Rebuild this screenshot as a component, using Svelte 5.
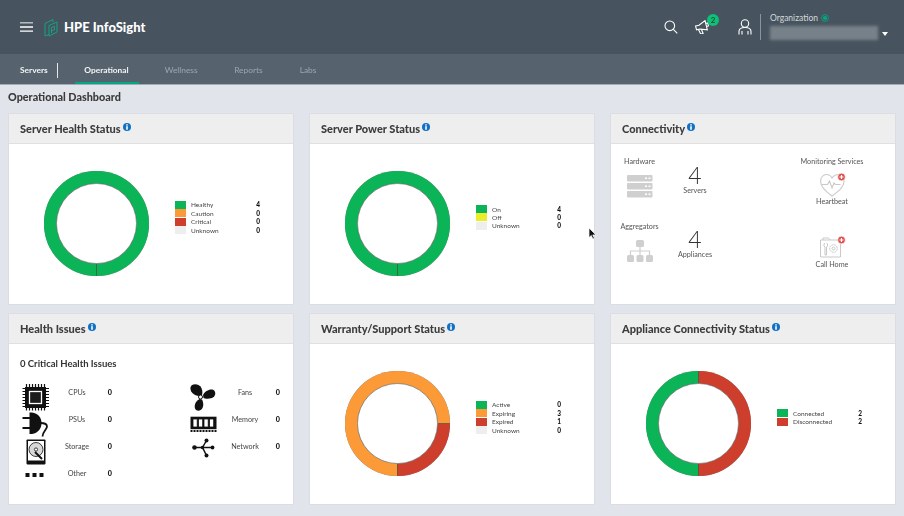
<script>
	const green = "#0cb458";
	const orange = "#fd9a38";
	const red = "#cd3f2c";
	const grey = "#eeeeee";
	const yellow = "#e8ee2a";

	const navItems = ["Wellness", "Reports", "Labs"];

	// one entry per donut card
	const healthLegend = [
		{ label: "Healthy", value: 4, color: green },
		{ label: "Caution", value: 0, color: orange },
		{ label: "Critical", value: 0, color: red },
		{ label: "Unknown", value: 0, color: grey }
	];
	const powerLegend = [
		{ label: "On", value: 4, color: green },
		{ label: "Off", value: 0, color: yellow },
		{ label: "Unknown", value: 0, color: grey }
	];
	const warrantyLegend = [
		{ label: "Active", value: 0, color: green },
		{ label: "Expiring", value: 3, color: orange },
		{ label: "Expired", value: 1, color: red },
		{ label: "Unknown", value: 0, color: grey }
	];
	const applianceLegend = [
		{ label: "Connected", value: 2, color: green },
		{ label: "Disconnected", value: 2, color: red }
	];

	const leftIssues = [
		{ icon: "cpu", label: "CPUs" },
		{ icon: "psu", label: "PSUs" },
		{ icon: "storage", label: "Storage" },
		{ icon: "other", label: "Other" }
	];
	const rightIssues = [
		{ icon: "fan", label: "Fans" },
		{ icon: "memory", label: "Memory" },
		{ icon: "network", label: "Network" }
	];

	const R = 46.25;
	const CIRC = 2 * Math.PI * R;

	// slices are drawn from 3 o'clock; the group is turned so they begin at 6 o'clock
	function slices(legend) {
		const total = legend.reduce((sum, item) => sum + item.value, 0);
		let offset = 0;
		return legend.filter(item => item.value > 0).map(item => {
			const len = (item.value / total) * CIRC;
			const slice = { color: item.color, len, offset, angle: (offset / CIRC) * 360 };
			offset += len;
			return slice;
		});
	}
</script>

{#snippet info()}
	<svg class="info" viewBox="0 0 10 10" width="8" height="8">
		<circle cx="5" cy="5" r="5" fill="#1271c4" />
		<rect x="4" y="1.6" width="2" height="1.6" fill="#fff" />
		<rect x="4" y="4" width="2" height="4.4" fill="#fff" />
	</svg>
{/snippet}

{#snippet donutCard(title, legend)}
	<section class="card">
		<h2>{title}{@render info()}</h2>
		<div class="donutBody">
			<svg class="donut" viewBox="0 0 105 105" width="105" height="105">
				<circle cx="52.5" cy="52.5" r="52.7" fill="#8a8a8a" />
				<g transform="rotate(90 52.5 52.5)">
					{#each slices(legend) as s}
						<circle cx="52.5" cy="52.5" r={R} fill="none" stroke={s.color} stroke-width="12.5"
							stroke-dasharray="{s.len} {CIRC - s.len}" stroke-dashoffset={-s.offset} />
					{/each}
					{#each slices(legend) as s}
						<line x1="92.5" y1="52.5" x2="105" y2="52.5" stroke="#4f4a3c" stroke-width="0.7"
							transform="rotate({s.angle} 52.5 52.5)" />
					{/each}
				</g>
				<circle cx="52.5" cy="52.5" r="40" fill="#fff" stroke="#666" stroke-width="0.6" />
			</svg>
			<div class="legend">
				{#each legend as item}
					<div class="legendRow">
						<span class="swatch" style="background:{item.color}"></span>
						<span class="legendLabel">{item.label}</span>
						<b>{item.value}</b>
					</div>
				{/each}
			</div>
		</div>
	</section>
{/snippet}

{#snippet issueIcon(name)}
	<svg viewBox="0 0 27 27" width="27" height="27">
		{#if name === "cpu"}
			<path d="M0 5h27M0 8h27M0 11h27M0 14h27M0 17h27M0 20h27M0 23h27M4 0v27M7 0v27M10 0v27M13 0v27M16 0v27M19 0v27M22 0v27" stroke="#111" stroke-width="1.200" transform="translate(0.500 -0.500)" />
			<rect x="3" y="3" width="21" height="21" fill="#111" />
			<rect x="7.500" y="7.500" width="12" height="12" fill="#1c1c1c" stroke="#fff" stroke-width="1.300" />
		{:else if name === "psu"}
			<path d="M0.500 7h8M0.500 17h8" stroke="#111" stroke-width="1.800" />
			<path d="M7.500 1.500h2.500c6 1 9.500 5 9.500 10.500s-3.500 10-9.500 11H7.500z" fill="#111" />
			<path d="M18.500 12C22 12 25 13 25 15.500 25 18.500 21 20 20.500 25.500" fill="none" stroke="#111" stroke-width="1.800" />
		{:else if name === "storage"}
			<rect x="4.500" y="1.400" width="19" height="25" rx="0.800" fill="#111" />
			<rect x="6" y="3" width="16" height="19.500" fill="#fff" />
			<circle cx="14" cy="11.500" r="7" fill="#d8d8d8" stroke="#111" stroke-width="0.800" />
			<circle cx="14" cy="11.500" r="1.600" fill="#fff" stroke="#111" stroke-width="0.800" />
			<path d="M13 14l7 7" stroke="#111" stroke-width="2" />
		{:else if name === "other"}
			<rect x="3.500" y="8" width="4" height="4" fill="#111" />
			<rect x="10.500" y="8" width="4" height="4" fill="#111" />
			<rect x="17.500" y="8" width="4" height="4" fill="#111" />
		{:else if name === "fan"}
			<path d="M9 12C4 11.500 0 8 .5 3.500 1 .5 5-.5 8.500 1 12 3 13 7 12 11z" fill="#111" />
			<path d="M13 11c2-4 7-6.500 10.500-5 3 2 2 6.500-1.500 8-3 1-7 1-8.500 0z" fill="#111" />
			<path d="M9.500 15c-4 2-5.500 6-4.500 9.500 1.500 3 5.500 3 7.500-.5 1.500-3 .5-6.500-.5-8.500z" fill="#111" />
			<circle cx="10.500" cy="13" r="2" fill="#fff" stroke="#111" stroke-width="1" />
		{:else if name === "memory"}
			<rect x="0.500" y="5.700" width="26" height="12.500" fill="#111" />
			<rect x="3" y="8" width="4.200" height="8" fill="#fff" stroke="#111" stroke-width="0.800" />
			<rect x="8.500" y="8" width="4.200" height="8" fill="#fff" stroke="#111" stroke-width="0.800" />
			<rect x="14" y="8" width="4.200" height="8" fill="#fff" stroke="#111" stroke-width="0.800" />
			<rect x="19.500" y="8" width="4.200" height="8" fill="#fff" stroke="#111" stroke-width="0.800" />
			<path d="M.5 20h26" stroke="#111" stroke-width="1.800" stroke-dasharray="2 1" />
		{:else}
			<path d="M4.500 9.500h18M12.500 9.500l4-7M12.500 9.500l4 8" stroke="#111" stroke-width="1.500" fill="none" />
			<circle cx="4.500" cy="9.500" r="2.300" fill="#111" /><circle cx="12.500" cy="9.500" r="1.800" fill="#111" />
			<circle cx="22.500" cy="9.500" r="1.900" fill="#111" /><circle cx="16.500" cy="2.400" r="2" fill="#111" /><circle cx="16.500" cy="17.400" r="2" fill="#111" />
		{/if}
	</svg>
{/snippet}

{#snippet issueColumn(items)}
	<div class="issueCol">
		{#each items as item}
			<div class="issueRow">
				<span class="issueIcon">{@render issueIcon(item.icon)}</span>
				<span class="issueLabel">{item.label}</span>
				<b>0</b>
			</div>
		{/each}
	</div>
{/snippet}

{#snippet plusDot()}
	<circle cx="21.500" cy="4" r="3.800" fill="#e04a4a" stroke="#fff" stroke-width="0.600" />
	<path d="M21.500 2v4M19.500 4h4" stroke="#fff" stroke-width="1.200" />
{/snippet}

<main>
	<header class="topbar">
		<div class="brand">
			<svg class="burger" viewBox="0 0 13 10" width="13" height="10">
				<path d="M0 .8h13" stroke="#c9cdd1" stroke-width="1.300" />
				<path d="M0 5h13M0 9.200h13" stroke="#fff" stroke-width="1.300" />
			</svg>
			<svg class="logo" viewBox="0 0 14 19" width="14" height="19" fill="none" stroke="#16a085" stroke-width="1">
				<path d="M1 5.500L9 1.500V4M1 5.500V18l4-1.500M5 7.500l8-3.500v10l-8 4z" />
				<path d="M7.500 15V9.500l3-1.200v3.500l-3 1.200" />
			</svg>
			<span class="brandName">HPE InfoSight</span>
		</div>
		<div class="tools">
			<svg class="tool" viewBox="0 0 14 14" width="14" height="14" fill="none" stroke="#fff" stroke-width="1.100">
				<circle cx="5.800" cy="5.800" r="4.800" /><path d="M9.300 9.300l4 4" />
			</svg>
			<div class="megaphone">
				<svg viewBox="0 0 15 14" width="15" height="14" fill="none" stroke="#fff" stroke-width="1.100">
					<g transform="rotate(-14 7 7)">
						<path d="M1 4.500h3.500l7-3v9.500l-7-2.500h-3.500zM11.500 4.500h2v3h-2M3 8.500l1 5h2.500l-.7-4.700" />
					</g>
				</svg>
				<span class="badge">2</span>
			</div>
			<svg class="tool user" viewBox="0 0 14 16" width="14" height="16" fill="none" stroke="#fff" stroke-width="1.100">
				<circle cx="7" cy="4.500" r="3.700" /><path d="M1 15.500v-3c0-2.500 2-4 6-4s6 1.500 6 4v3M4 12v3.500M10 12v3.500" />
			</svg>
			<div class="org">
				<div class="orgLabel">Organization
					<svg viewBox="0 0 10 10" width="8" height="8"><circle cx="5" cy="5" r="4.300" fill="none" stroke="#01a982" /><circle cx="5" cy="5" r="2.600" fill="#01a982" /></svg>
				</div>
				<div class="orgRow">
					<div class="orgBlur"></div>
					<span class="caret"></span>
				</div>
			</div>
		</div>
	</header>

	<nav class="subnav">
		<span class="servers">Servers</span>
		<span class="navItem active">Operational</span>
		{#each navItems as item}
			<span class="navItem {item.toLowerCase()}">{item}</span>
		{/each}
	</nav>

	<h1>Operational Dashboard</h1>

	<div class="grid">
		{@render donutCard("Server Health Status", healthLegend)}
		{@render donutCard("Server Power Status", powerLegend)}

		<section class="card">
			<h2>Connectivity{@render info()}</h2>
			<div class="connBody">
				<div class="connLeft">
					<div class="connRow">
						<div class="connKind">
							<span>Hardware</span>
							<svg viewBox="0 0 26 23" width="26" height="23">
								<g fill="#cfcfcf">
									<rect y="0" width="25.500" height="6.500" rx="1" /><rect y="8" width="25.500" height="6.500" rx="1" /><rect y="16" width="25.500" height="6.500" rx="1" />
								</g>
								<path d="M18 3.200h2M21.500 3.200h2M18 11.200h2M21.500 11.200h2M18 19.200h2M21.500 19.200h2" stroke="#fff" stroke-width="1.400" />
							</svg>
						</div>
						<div class="connCount"><span class="big">4</span><span>Servers</span></div>
					</div>
					<div class="connRow">
						<div class="connKind">
							<span>Aggregators</span>
							<svg viewBox="0 0 26 23" width="26" height="23">
								<g fill="#cfcfcf">
									<rect x="9" y="0" width="8" height="7" rx="1.500" />
									<rect x="0" y="15" width="7" height="7" rx="1.500" /><rect x="9.500" y="15" width="7" height="7" rx="1.500" /><rect x="19" y="15" width="7" height="7" rx="1.500" />
								</g>
								<path d="M13 7v8M3.500 15v-4h19v4" fill="none" stroke="#cfcfcf" stroke-width="1.200" />
							</svg>
						</div>
						<div class="connCount"><span class="big">4</span><span>Appliances</span></div>
					</div>
				</div>
				<div class="connRight">
					<span>Monitoring Services</span>
					<svg class="heart" viewBox="0 0 26 24" width="26" height="24" fill="none" stroke="#c9c9c9" stroke-width="1.100">
						<path d="M12 23C5 18 .6 14 .6 8.500.6 4.500 3 1.500 6.500 1.500 9 1.500 11 3 12 5c1.500-2 3.500-3.500 6-3.500 3.500 0 6 3 6 7 0 5.500-5 9.500-12 14.500z" />
						<path d="M2 11.500h5.500l2-3.500 2.500 7 2-5 1.500 1.500h5" />
						{@render plusDot()}
					</svg>
					<span>Heartbeat</span>
					<svg class="callHome" viewBox="0 0 26 22" width="26" height="22" fill="none" stroke="#c9c9c9" stroke-width="1">
						<path d="M.5 4h20v17H.5zM3 4V2h5.500l1.500 2" />
						<circle cx="13.500" cy="12.500" r="3.800" stroke-dasharray="2 .6" /><circle cx="13.500" cy="12.500" r="1.500" />
						<path d="M5 7c-1.500 1-1.500 3 0 4v8h1.500v-8c1.500-1 1.500-3 0-4" />
						{@render plusDot()}
					</svg>
					<span>Call Home</span>
				</div>
			</div>
		</section>

		<section class="card">
			<h2>Health Issues{@render info()}</h2>
			<div class="issuesBody">
				<div class="critical">0 Critical Health Issues</div>
				<div class="issueCols">
					{@render issueColumn(leftIssues)}
					{@render issueColumn(rightIssues)}
				</div>
			</div>
		</section>

		{@render donutCard("Warranty/Support Status", warrantyLegend)}
		{@render donutCard("Appliance Connectivity Status", applianceLegend)}
	</div>

	<svg class="cursor" viewBox="0 0 9 13" width="9" height="13">
		<path d="M1 1v9.500l2.300-2 1.600 3.500 1.500-.7-1.600-3.400H8z" fill="#111" stroke="#fff" stroke-width="0.700" />
	</svg>
</main>

<style>
	:global(body) {
		margin: 0;
		font-family: Lato, "Liberation Sans", sans-serif;
		background: #e1e4ea;
	}

	main {
		position: relative;
		width: 904px;
		height: 516px;
		overflow: hidden;
		color: #333;
		/* the source capture is slightly soft */
		filter: blur(0.3px);
	}

	.topbar {
		height: 54px;
		background: #47545f;
		display: flex;
		justify-content: space-between;
		align-items: center;
		padding: 0 16px 0 20px;
		box-sizing: border-box;
	}

	.brand {
		display: flex;
		align-items: center;
	}

	.logo {
		margin-left: 11px;
	}

	.brandName {
		margin-left: 6px;
		color: #fff;
		font-size: 13px;
		font-weight: 900;
	}

	.tools {
		display: flex;
		align-items: center;
	}

	.megaphone {
		position: relative;
		margin-left: 17px;
		display: flex;
	}

	.badge {
		position: absolute;
		left: 12px;
		top: -6px;
		width: 12px;
		height: 12px;
		border-radius: 50%;
		background: #0dc178;
		color: #1c4a3a;
		font-size: 8px;
		font-weight: 700;
		text-align: center;
		line-height: 12px;
	}

	.user {
		margin-left: 28px;
	}

	.org {
		margin-left: 8px;
		padding-left: 9px;
		height: 26px;
		border-left: 1px solid #8a949d;
		color: #d3d7da;
		font-size: 8.500px;
	}

	.orgLabel {
		margin-top: -2px;
		display: flex;
		align-items: center;
		gap: 3px;
		height: 12px;
	}

	.orgRow {
		display: flex;
		align-items: center;
		margin-top: 2px;
	}

	.orgBlur {
		width: 108px;
		height: 14px;
		background: #77818a;
		filter: blur(1.500px);
	}

	.caret {
		margin-left: 4px;
		margin-top: 2px;
		border: 3.500px solid transparent;
		border-top: 4px solid #fff;
		border-bottom: 0;
	}

	.subnav {
		height: 31px;
		background: #56636f;
		border-bottom: 1px solid #a3abb5;
		box-sizing: border-box;
		display: flex;
		align-items: center;
		padding-left: 20px;
		font-size: 8.400px;
		color: #9ca5ae;
		font-weight: 700;
	}

	.servers {
		color: #f3f4f5;
		margin-top: 2px;
		padding-right: 9px;
		line-height: 15px;
		border-right: 1px solid #e5e7e9;
	}

	.navItem {
		position: relative;
		height: 30px;
		line-height: 32px;
		font-weight: 400;
	}

	.active {
		margin-left: 26.500px;
		color: #f3f4f5;
		font-weight: 700;
	}

	.active::after {
		content: "";
		position: absolute;
		left: -9px;
		right: -10px;
		bottom: 0;
		height: 2px;
		background: #01a982;
	}

	.wellness {
		margin-left: 36px;
	}

	.reports {
		margin-left: 36.500px;
	}

	.labs {
		margin-left: 37px;
	}

	h1 {
		margin: 5px 0 0 8px;
		font-size: 10.800px;
		line-height: 13px;
		font-weight: 900;
		color: #3a3a3a;
	}

	.grid {
		margin: 10.500px 9px 0;
		display: grid;
		grid-template-columns: repeat(3, 284px);
		grid-template-rows: 190px 190px;
		column-gap: 17px;
		row-gap: 10px;
	}

	.card {
		background: #fff;
		display: flex;
		flex-direction: column;
		box-shadow: 0 0 1px #b9bdc4;
	}

	h2 {
		margin: 0;
		flex: 0 0 30px;
		box-sizing: border-box;
		padding-left: 11px;
		display: flex;
		align-items: center;
		background: #eeeeee;
		border-bottom: 1px solid #e0e0e0;
		font-size: 11px;
		font-weight: 900;
		color: #3c3c3c;
	}

	.info {
		margin: -3px 0 0 2px;
	}

	.donutBody {
		flex: 1;
		display: flex;
		align-items: center;
		padding-left: 35px;
	}

	.legend {
		margin-left: 26px;
		margin-bottom: 12px;
		width: 85px;
		font-size: 6.500px;
		color: #444;
	}

	.legendRow {
		display: flex;
		align-items: center;
		height: 8.400px;
	}

	.legendRow b {
		color: #111;
		font-weight: 900;
	}

	.swatch {
		width: 11px;
		height: 8px;
	}

	.legendLabel {
		margin-left: 5px;
		flex: 1;
	}

	.connBody {
		flex: 1;
		display: flex;
		justify-content: space-between;
		padding: 13px 28px 0 12px;
		font-size: 7.200px;
		line-height: 9px;
		color: #555;
	}

	.connRow {
		display: flex;
		height: 65px;
	}

	.connKind {
		width: 33px;
		display: flex;
		flex-direction: column;
		align-items: center;
		gap: 9.500px;
		white-space: nowrap;
	}

	.connCount {
		margin-left: 19px;
		margin-top: 7.500px;
		width: 40px;
		display: flex;
		flex-direction: column;
		align-items: center;
	}

	.connRow + .connRow .connCount {
		margin-top: 6.500px;
	}

	.big {
		font-size: 23px;
		font-weight: 300;
		line-height: 22px;
		color: #333;
	}

	.connRight {
		width: 70px;
		display: flex;
		flex-direction: column;
		align-items: center;
		white-space: nowrap;
	}

	.heart {
		margin: 7px 0 0 1px;
	}

	.callHome {
		margin: 30.500px 0 1.500px 1px;
	}

	.issuesBody {
		flex: 1;
		padding: 14px 13px 0 11px;
	}

	.critical {
		font-size: 9.500px;
		font-weight: 700;
		color: #333;
		line-height: 11px;
	}

	.issueCols {
		margin-top: 15px;
		display: flex;
		justify-content: space-between;
	}

	.issueCol {
		display: flex;
		flex-direction: column;
		width: 92px;
	}

	.issueRow {
		display: grid;
		grid-template-columns: 30px 54px 1fr;
		align-items: start;
		height: 27.300px;
		font-size: 7.200px;
		color: #444;
		line-height: 17px;
	}

	.issueIcon {
		display: flex;
		justify-content: center;
		line-height: 0;
	}

	.issueLabel {
		text-align: center;
	}

	.issueRow b {
		text-align: right;
		color: #111;
		font-weight: 900;
	}

	.cursor {
		position: absolute;
		left: 588px;
		top: 227px;
	}
</style>
